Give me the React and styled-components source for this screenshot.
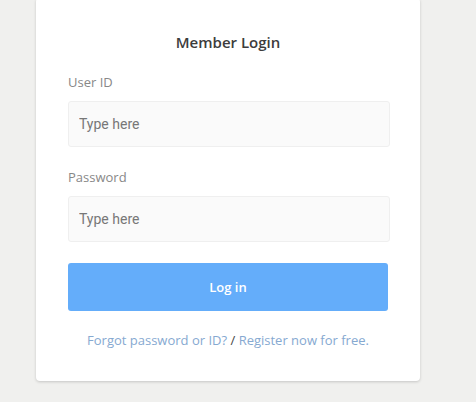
import React from "react";
import styled, { createGlobalStyle } from "styled-components";

const Global = createGlobalStyle`
  html, body { margin: 0; padding: 0; background: #f0f0ee; }
  body { font-family: "Open Sans", "Liberation Sans", sans-serif; }
  * { box-sizing: border-box; }
`;

const Page = styled.div`
  width: 476px;
  height: 402px;
  overflow: hidden;
  padding-left: 36px;
`;

const Card = styled.div`
  width: 384px;
  margin-top: -2px;
  background: #fff;
  border-radius: 4px;
  box-shadow: 0 1px 3px rgba(0, 0, 0, 0.18);
  padding: 34px 30px 31px 32px;
  display: flex;
  flex-direction: column;
`;

const Title = styled.h2`
  margin: 0 0 20px;
  font-size: 15px;
  line-height: 20px;
  font-weight: 600;
  color: #3c3c3c;
  text-align: center;
  padding-right: 2px;
`;

const Label = styled.label`
  font-size: 13px;
  line-height: 20px;
  color: #888;
  margin-top: ${(p) => p.$top || 0}px;
`;

const Input = styled.input`
  margin-top: 9px;
  width: 322px;
  height: 46px;
  border: 1px solid #efefef;
  border-radius: 3px;
  background: #fafafa;
  padding: 0 10px;
  font-family: Roboto, "Liberation Sans", sans-serif;
  font-size: 14px;
  outline: none;
  &::placeholder { color: #777; }
`;

const Button = styled.button`
  margin-top: 21px;
  width: 320px;
  height: 48px;
  border: none;
  border-radius: 3px;
  background: #64adfa;
  color: #fff;
  font-family: "Open Sans", "Liberation Sans", sans-serif;
  font-size: 13px;
  font-weight: 600;
`;

const Links = styled.p`
  margin: 19px 0 0;
  font-size: 13px;
  line-height: 20px;
  color: #444;
  text-align: center;
  padding-right: 2px;
`;

const Link = styled.a`
  color: #86a9d1;
  text-decoration: none;
`;

export default function App() {
  return (
    <>
      <Global />
      <Page>
        <Card>
          <Title>Member Login</Title>
          <Label>User ID</Label>
          <Input placeholder="Type here" />
          <Label $top={20}>Password</Label>
          <Input type="password" placeholder="Type here" />
          <Button>Log in</Button>
          <Links>
            <Link href="#">Forgot password or ID?</Link> /{" "}
            <Link href="#">Register now for free.</Link>
          </Links>
        </Card>
      </Page>
    </>
  );
}
